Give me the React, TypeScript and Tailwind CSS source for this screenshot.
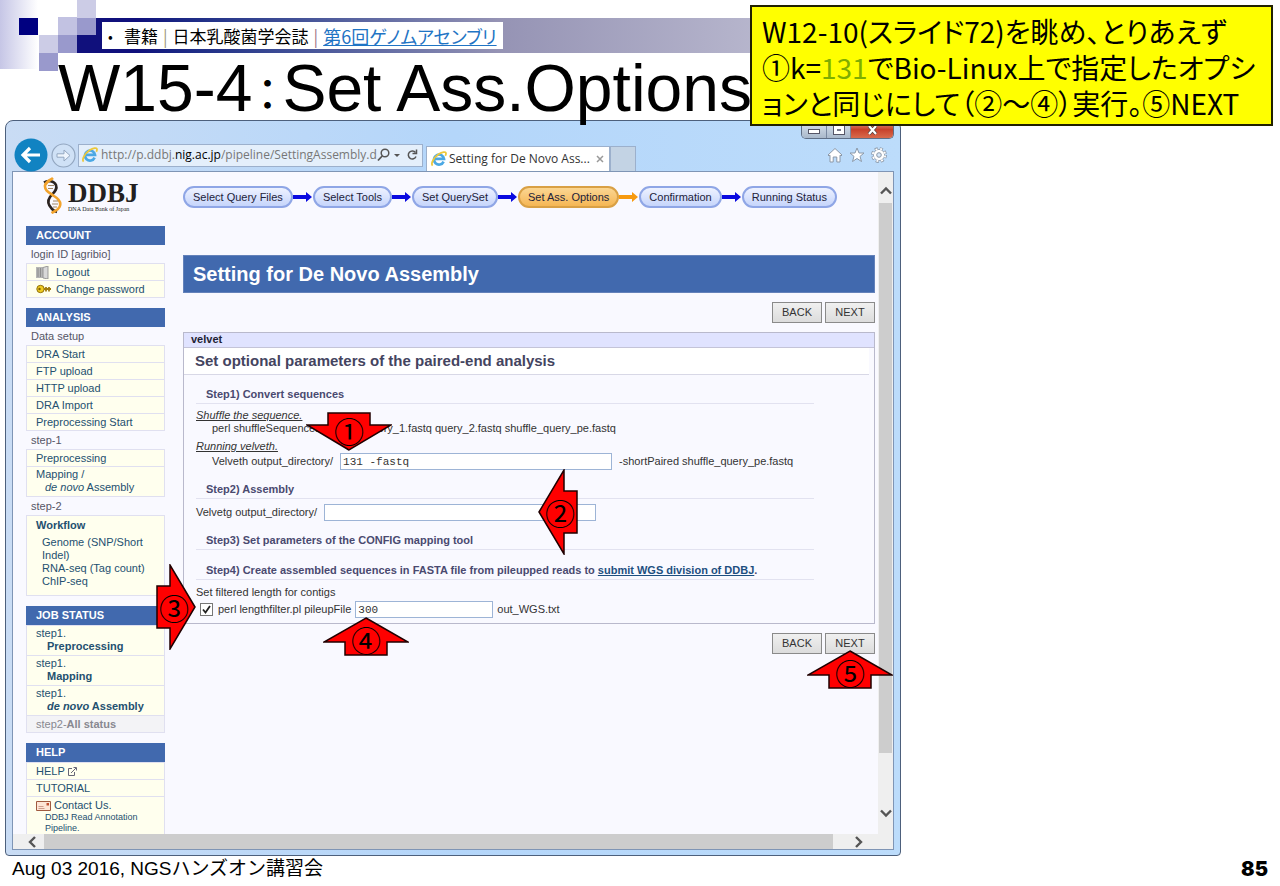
import React from "react";

type Dir = "up" | "down" | "left" | "right";

const ARROWS: Record<Dir, { w: number; h: number; points: string; box: string; digit: string }> = {
  up: { w: 86, h: 39, points: "43,1 85,25 64,25 64,38 22,38 22,25 1,25", box: "w-[86px] h-[39px]", digit: "pt-[4px]" },
  down: { w: 86, h: 39, points: "43,38 1,13 22,13 22,1 64,1 64,13 85,13", box: "w-[86px] h-[39px]", digit: "pb-[4px]" },
  left: { w: 40, h: 86, points: "1,43 26,1 26,22 39,22 39,64 26,64 26,85", box: "w-[40px] h-[86px]", digit: "pl-[4px]" },
  right: { w: 40, h: 86, points: "39,43 14,1 14,22 1,22 1,64 14,64 14,85", box: "w-[40px] h-[86px]", digit: "pr-[4px]" },
};

function Pointer({ dir, label, place }: { dir: Dir; label: string; place: string }) {
  const a = ARROWS[dir];
  return (
    <div className={`absolute ${a.box} ${place}`}>
      <svg className="absolute inset-0" width={a.w} height={a.h} viewBox={`0 0 ${a.w} ${a.h}`} aria-hidden="true">
        <polygon points={a.points} fill="#ff0000" stroke="#200000" strokeWidth="1.5" strokeLinejoin="miter" />
      </svg>
      <span className={`relative flex h-full w-full items-center justify-center font-['Noto_Sans_CJK_JP',sans-serif] text-[30px] leading-[28px] text-black ${a.digit}`}>
        {label}
      </span>
    </div>
  );
}

function IeIcon() {
  return (
    <svg width="16" height="16" viewBox="0 0 16 16" aria-hidden="true" className="shrink-0">
      <path d="M12.6 10.6A5 5 0 1 1 13 7.9H4.2" fill="none" stroke="#4aa8e4" strokeWidth="2.7" />
      <path d="M1.6 14.6C-.6 12.4 3 6.2 7.5 3.2 11 .8 15 .2 15 2.4c0 .8-.3 1.6-.7 2.3" fill="none" stroke="#ecc83c" strokeWidth="1.8" />
    </svg>
  );
}

function DdbjLogo() {
  return (
    <div className="flex h-[37px] items-start gap-[4px] pl-[16px]">
      <svg width="22" height="37" viewBox="0 0 22 37" aria-hidden="true">
        <path d="M2 5.5C6 3 12 4 14 8c2 5-3 8-6 12-2.500 3.500-2 8 2 12 1 1 3 2.500 5 3" fill="none" stroke="#2b2320" strokeWidth="2.6" />
        <path d="M11 1C9 3 4 4 3 8.500c-.5 5 4 7 9 10.500 5 3 7.500 7 5.500 11-1.500 3.500-5 4-8 6" fill="none" stroke="#f2a32c" strokeWidth="2.6" />
        <path d="M6 8.500h6M6 11.500h5M11 24h5M10 27h6M11 30h4" stroke="#8a6a40" strokeWidth=".8" />
      </svg>
      <div className="flex flex-col pt-[4px] font-['Liberation_Serif',serif] text-[#231f20]">
        <span className="text-[27px] font-bold leading-[25px]">DDBJ</span>
        <span className="whitespace-nowrap text-[6px] leading-[7px]">DNA Data Bank of Japan</span>
      </div>
    </div>
  );
}

function SideTitle({ children }: { children: React.ReactNode }) {
  return <h2 className="flex h-[19px] items-center bg-[#4169ae] pl-[10px] font-bold text-white">{children}</h2>;
}

function SideLabel({ children }: { children: React.ReactNode }) {
  return <p className="flex h-[18px] items-center pl-[5px] text-[#555566]">{children}</p>;
}

function SideList({ children }: { children: React.ReactNode }) {
  return <ul className="border border-b-0 border-[#e0e0f0] bg-[#ffffee]">{children}</ul>;
}

function SideItem({ children }: { children: React.ReactNode }) {
  return (
    <li className="border-b border-[#e0e0f0]">
      <a href="#" className="flex h-[16px] items-center pl-[9px]">
        {children}
      </a>
    </li>
  );
}

function SideItem2({ top, children }: { top: string; children: React.ReactNode }) {
  return (
    <li className="border-b border-[#e0e0f0] pb-[2px] pl-[9px] pt-px leading-[13px]">
      <a href="#" className="block">
        {top}
        <span className="block pl-[11px]">{children}</span>
      </a>
    </li>
  );
}

function Sidebar() {
  return (
    <nav className="w-[139px] shrink-0 text-[11px] leading-[13px] text-[#245070]">
      <SideTitle>ACCOUNT</SideTitle>
      <SideLabel>login ID [agribio]</SideLabel>
      <SideList>
        <SideItem>
          <svg width="13" height="13" viewBox="0 0 13 13" className="mr-[7px]" aria-hidden="true">
            <path d="M0 1h7v11H0z" fill="#b5b5b5" />
            <path d="M7 1.5l5-1.500v13l-5-1z" fill="#d8d8d8" stroke="#888" strokeWidth=".8" />
            <path d="M2 2v9M4.500 2v9" stroke="#8d8d8d" />
          </svg>
          Logout
        </SideItem>
        <SideItem>
          <svg width="16" height="10" viewBox="0 0 16 10" className="mr-[4px]" aria-hidden="true">
            <circle cx="4.5" cy="5" r="3.7" fill="#f0cc20" stroke="#90700c" />
            <circle cx="3.5" cy="5" r="1.2" fill="#806000" />
            <path d="M8 5h7M10 5.5v2M13 5.5v2M10 4.5V3M13 4.5V3" stroke="#a07c10" strokeWidth="1.8" />
          </svg>
          Change password
        </SideItem>
      </SideList>

      <div className="mt-[10px]">
        <SideTitle>ANALYSIS</SideTitle>
        <SideLabel>Data setup</SideLabel>
        <SideList>
          <SideItem>DRA Start</SideItem>
          <SideItem>FTP upload</SideItem>
          <SideItem>HTTP upload</SideItem>
          <SideItem>DRA Import</SideItem>
          <SideItem>Preprocessing Start</SideItem>
        </SideList>
        <SideLabel>step-1</SideLabel>
        <SideList>
          <SideItem>Preprocessing</SideItem>
          <li className="border-b border-[#e0e0f0] pb-[2px] pl-[9px] pt-px">
            <a href="#" className="block">
              Mapping /
              <span className="block pl-[9px]">
                <i>de novo</i> Assembly
              </span>
            </a>
          </li>
        </SideList>
        <SideLabel>step-2</SideLabel>
        <SideList>
          <li className="border-b border-[#e0e0f0] pb-[7px] pl-[9px] pt-[3px]">
            <a href="#" className="font-bold">
              Workflow
            </a>
            <div className="flex flex-col pl-[6px] pt-[4px]">
              <a href="#">
                Genome (SNP/Short
                <br />
                Indel)
              </a>
              <a href="#">RNA-seq (Tag count)</a>
              <a href="#">ChIP-seq</a>
            </div>
          </li>
        </SideList>
      </div>

      <div className="mt-[10px]">
        <SideTitle>JOB STATUS</SideTitle>
        <SideList>
          <SideItem2 top="step1.">
            <b>Preprocessing</b>
          </SideItem2>
          <SideItem2 top="step1.">
            <b>Mapping</b>
          </SideItem2>
          <SideItem2 top="step1.">
            <b>
              <i>de novo</i> Assembly
            </b>
          </SideItem2>
          <li className="flex h-[17px] items-center border-b border-[#e0e0f0] bg-[#f3f3f6] pl-[9px] text-[#888890]">
            step2-<b>All status</b>
          </li>
        </SideList>
      </div>

      <div className="mt-[10px]">
        <SideTitle>HELP</SideTitle>
        <SideList>
          <SideItem>
            HELP
            <svg width="9" height="9" viewBox="0 0 9 9" className="ml-[3px]" fill="none" stroke="#667" aria-hidden="true">
              <path d="M4 1.5H.5v7h6V5M3 6l5-5M5.5.5h3v3" />
            </svg>
          </SideItem>
          <SideItem>TUTORIAL</SideItem>
          <li className="h-[37px] pl-[9px] pt-[2px]">
            <a href="#" className="block">
              <span className="flex items-center gap-[3px]">
                <svg width="15" height="10" viewBox="0 0 15 10" aria-hidden="true">
                  <path d="M.5.5h14v9H.5z" fill="#fde5d5" stroke="#a05a40" />
                  <path d="M2.5 5.5h5M2.5 7.5h6" stroke="#c08a78" strokeWidth=".8" />
                  <path d="M10.500 2h2.500v2.500h-2.500z" fill="#c05030" />
                </svg>
                Contact Us.
              </span>
              <span className="block pl-[9px] text-[9px] leading-[11px]">
                DDBJ Read Annotation
                <br />
                Pipeline.
              </span>
            </a>
          </li>
        </SideList>
      </div>
    </nav>
  );
}

const STEPS = ["Select Query Files", "Select Tools", "Set QuerySet", "Set Ass. Options", "Confirmation", "Running Status"];

function Steps() {
  return (
    <ol className="flex items-center text-[11px] leading-[13px] text-[#22223a]">
      {STEPS.map((name, i) => (
        <li key={name} className="flex items-center whitespace-nowrap">
          <span
            className={
              i === 3
                ? "flex h-[22px] items-center rounded-full border-2 border-[#d9a045] bg-linear-to-b from-[#fbd692] to-[#f5b653] px-[8px]"
                : "flex h-[22px] items-center rounded-full border-2 border-[#8fa6e6] bg-linear-to-b from-[#eef2ff] to-[#c6d5fb] px-[8px]"
            }
          >
            {name}
          </span>
          {i < STEPS.length - 1 && (
            <svg width="20" height="12" viewBox="0 0 20 12" aria-hidden="true">
              <path d="M0 4h13V1l6 5-6 5V8H0z" fill={i === 3 ? "#f79a10" : "#0a0ae0"} />
            </svg>
          )}
        </li>
      ))}
    </ol>
  );
}

function NavButtons() {
  const cls =
    "h-[21px] w-[50px] border border-[#8a8a8a] bg-linear-to-b from-[#f0f0f0] to-[#dcdcdc] text-[11px] leading-[13px] text-[#333]";
  return (
    <div className="flex justify-end gap-[3px]">
      <button type="button" className={cls}>
        BACK
      </button>
      <button type="button" className={cls}>
        NEXT
      </button>
    </div>
  );
}

function StepTitle({ children }: { children: React.ReactNode }) {
  return <h4 className="mr-[48px] h-[16px] border-b border-[#e2e2f0] pl-[10px] font-bold text-[#4a4a70]">{children}</h4>;
}

const FIELD =
  "h-[17px] border border-[#9db4d6] bg-white px-[2px] font-['Liberation_Mono',monospace] text-[11px] leading-[13px] text-[#333]";

function Settings() {
  return (
    <main className="min-w-0 flex-1 pr-[3px] pt-[14px] text-[11px] leading-[13px] text-[#333]">
      <Steps />
      <h1 className="mt-[47px] flex h-[38px] items-center border border-[#6482ba] bg-[#4169ae] pl-[9px] text-[20px] font-bold leading-[24px] text-white">
        Setting for De Novo Assembly
      </h1>
      <div className="mt-[9px]">
        <NavButtons />
      </div>
      <section className="mt-[9px] border border-[#b9b9cc]">
        <h2 className="h-[15px] border-b border-[#c4c4d8] bg-[#e0e3ff] pl-[7px] font-bold text-[#222233]">velvet</h2>
        <h3 className="mr-[5px] flex h-[27px] items-center border-b border-[#d8d8e6] bg-white pl-[11px] text-[15px] font-bold leading-[18px] text-[#44445f]">
          Set optional parameters of the paired-end analysis
        </h3>
        <div className="flex flex-col px-[12px] pb-[5px] pt-[13px]">
          <StepTitle>Step1) Convert sequences</StepTitle>
          <p className="mt-[5px] italic underline">Shuffle the sequence.</p>
          <p className="pl-[16px]">perl shuffleSequences_fastq.pl query_1.fastq query_2.fastq shuffle_query_pe.fastq</p>
          <p className="mt-[5px] italic underline">Running velveth.</p>
          <div className="flex items-center pl-[16px]">
            <label htmlFor="velveth">Velveth output_directory/</label>
            <input id="velveth" defaultValue="131 -fastq" className={`${FIELD} ml-[7px] mr-[7px] w-[272px]`} />
            -shortPaired shuffle_query_pe.fastq
          </div>
          <div className="mt-[13px]">
            <StepTitle>Step2) Assembly</StepTitle>
          </div>
          <div className="mt-[5px] flex items-center">
            <label htmlFor="velvetg">Velvetg output_directory/</label>
            <input id="velvetg" className={`${FIELD} ml-[7px] w-[272px]`} />
          </div>
          <div className="mt-[13px]">
            <StepTitle>Step3) Set parameters of the CONFIG mapping tool</StepTitle>
          </div>
          <div className="mt-[14px]">
            <StepTitle>
              Step4) Create assembled sequences in FASTA file from pileupped reads to{" "}
              <a href="#" className="text-[#1d4f80] underline">
                submit WGS division of DDBJ
              </a>
              .
            </StepTitle>
          </div>
          <p className="mt-[6px]">Set filtered length for contigs</p>
          <div className="mt-[2px] flex items-center">
            <span className="relative ml-[4px] mr-[5px] flex h-[13px] w-[13px]">
              <input
                id="filter"
                type="checkbox"
                defaultChecked
                className="peer h-[13px] w-[13px] appearance-none border border-[#777] bg-white"
              />
              <svg
                className="pointer-events-none invisible absolute inset-0 peer-checked:visible"
                width="13"
                height="13"
                viewBox="0 0 13 13"
                fill="none"
                stroke="#222"
                strokeWidth="1.8"
                aria-hidden="true"
              >
                <path d="M3 6.5l2.500 3L10 3" />
              </svg>
            </span>
            <label htmlFor="filter">perl lengthfilter.pl pileupFile</label>
            <input aria-label="Filtered length" defaultValue="300" className={`${FIELD} ml-[4px] mr-[4px] w-[138px]`} />
            out_WGS.txt
          </div>
        </div>
      </section>
      <div className="mt-[9px]">
        <NavButtons />
      </div>
    </main>
  );
}

function WindowControls() {
  return (
    <div className="flex h-[18px] overflow-hidden rounded-b-[5px] border border-t-0 border-[#5f6f86]">
      <button type="button" aria-label="Minimize" className="flex w-[25px] items-end justify-center border-r border-[#7888a0] bg-linear-to-b from-[#dce6f0] to-[#a9b8ca] pb-[4px]">
        <span className="h-[5px] w-[12px] border border-[#556] bg-white" />
      </button>
      <button type="button" aria-label="Maximize" className="flex w-[24px] items-end justify-center border-r border-[#7888a0] bg-linear-to-b from-[#dce6f0] to-[#a9b8ca] pb-[4px]">
        <span className="h-[8px] w-[10px] border-[3px] border-white bg-[#778] outline outline-[#556]" />
      </button>
      <button type="button" aria-label="Close" className="flex w-[42px] items-end justify-center bg-linear-to-b from-[#e09a88] via-[#c8402a] to-[#d86a4c] pb-[3px]">
        <svg width="11" height="10" viewBox="0 0 11 10" aria-hidden="true">
          <path d="M2 1l7 8M9 1l-7 8" stroke="#54403f" strokeWidth="3.6" />
          <path d="M2 1l7 8M9 1l-7 8" stroke="#fff" strokeWidth="2.2" />
        </svg>
      </button>
    </div>
  );
}

function Toolbar() {
  return (
    <div className="flex h-[32px] items-center px-[2px] font-['Open_Sans',sans-serif] text-[12px] leading-[16px]">
      <button type="button" aria-label="Back" className="shrink-0">
        <svg width="34" height="34" viewBox="0 0 34 34" aria-hidden="true">
          <circle cx="17" cy="17" r="16.5" fill="#1183c2" />
          <path d="M26 17H10M16 10l-7 7 7 7" fill="none" stroke="#fff" strokeWidth="3.2" />
        </svg>
      </button>
      <button type="button" aria-label="Forward" className="ml-[3px] shrink-0">
        <svg width="25" height="25" viewBox="0 0 25 25" fill="none" aria-hidden="true">
          <circle cx="12.5" cy="12.5" r="11.5" fill="#cfe1f6" stroke="#93a7c0" strokeWidth="1.2" />
          <path d="M6 10.8h7V7l6 5.5-6 5.5v-3.800H6z" fill="#eef5fd" stroke="#93a7c0" />
        </svg>
      </button>
      <div className="ml-[2px] flex h-[23px] w-[345px] shrink-0 items-center border border-[#9cb0cc] bg-[#e4effb] pl-[3px] text-[#777]">
        <IeIcon />
        <span role="textbox" aria-label="Address" className="ml-[3px] w-[275px] whitespace-nowrap">
          http://p.ddbj.<span className="text-black">nig.ac.jp</span>/pipeline/SettingAssembly.d
        </span>
        <svg width="44" height="16" viewBox="0 0 44 16" fill="none" stroke="#555" strokeWidth="1.5" className="shrink-0" aria-hidden="true">
          <circle cx="9" cy="6" r="3.8" />
          <path d="M6.2 9L2 13.5" strokeWidth="1.8" />
          <path d="M18 7h6l-3 3z" fill="#555" stroke="none" />
          <path d="M39.5 5.5A4 4 0 1 0 40 9.5" />
          <path d="M40.5 2.5v4h-4" />
        </svg>
      </div>
      <div className="ml-[3px] flex h-[25px] w-[184px] shrink-0 items-center self-end border border-b-0 border-[#9cb0cc] bg-white pl-[4px] text-[#333]">
        <IeIcon />
        <span className="ml-[2px] flex-1 whitespace-nowrap">Setting for De Novo Ass...</span>
        <button type="button" aria-label="Close tab" className="mr-[5px] text-[#999]">
          <svg width="8" height="8" viewBox="0 0 8 8" stroke="currentColor" strokeWidth="1.5" aria-hidden="true">
            <path d="M1 1l6 6M7 1L1 7" />
          </svg>
        </button>
      </div>
      <button type="button" aria-label="New tab" className="h-[25px] w-[26px] shrink-0 self-end border border-b-0 border-[#9cb0cc] bg-[#c3d3e4]" />
      <div className="ml-auto flex items-center gap-[6px] pr-[5px]">
        <button type="button" aria-label="Home">
          <svg width="16" height="16" viewBox="0 0 16 16" fill="#fff" stroke="#8b98a8" aria-hidden="true">
            <path d="M8 1.5l7 6.500-1 1-1-.8V15H9.800v-5H6.200v5H3V8.200L2 9 1 8z" />
          </svg>
        </button>
        <button type="button" aria-label="Favorites">
          <svg width="16" height="16" viewBox="0 0 16 16" fill="#fff" stroke="#8b98a8" aria-hidden="true">
            <path d="M8 1l2 5h5l-4 3.400 1.500 5.100L8 11.500l-4.500 3L5 9.400 1 6h5z" />
          </svg>
        </button>
        <button type="button" aria-label="Tools">
          <svg width="16" height="16" viewBox="0 0 16 16" aria-hidden="true">
            <circle cx="8" cy="8" r="6.2" fill="none" stroke="#8b98a8" strokeWidth="3.4" strokeDasharray="2.9 1.97" />
            <circle cx="8" cy="8" r="5.6" fill="#fff" stroke="#8b98a8" strokeWidth=".8" />
            <circle cx="8" cy="8" r="6.2" fill="none" stroke="#fff" strokeWidth="1.8" strokeDasharray="1.9 2.97" strokeDashoffset="-.5" />
            <circle cx="8" cy="8" r="2.3" fill="#d5e7fa" stroke="#8b98a8" />
          </svg>
        </button>
      </div>
    </div>
  );
}

function Chevron({ d }: { d: string }) {
  return (
    <svg width="12" height="12" viewBox="0 0 12 12" fill="none" stroke="#555" strokeWidth="2.4" aria-hidden="true">
      <path d={d} />
    </svg>
  );
}

function Browser() {
  return (
    <section className="ml-[5px] w-[70%] min-w-[896px] rounded-t-[8px] rounded-b-[4px] border border-[#4d607c] bg-linear-to-r from-[#c9dcf4] via-[#b4d6fa] to-[#bcdcfb] px-[6px] pb-[5px]">
      <div className="flex justify-end">
        <WindowControls />
      </div>
      <Toolbar />
      <div className="border border-[#7f95b5] bg-[#f9f9ff]">
        <div className="flex">
          <div className="flex min-w-0 flex-1 flex-col">
            <div className="flex gap-[18px] pl-[13px]">
              <div className="flex shrink-0 flex-col">
                <div className="h-[54px] pt-[5px]">
                  <DdbjLogo />
                </div>
                <Sidebar />
              </div>
              <Settings />
            </div>
          </div>
          <div className="flex w-[15px] shrink-0 flex-col items-center bg-[#efefef]">
            <div className="flex h-[31px] items-center pt-[6px]">
              <Chevron d="M1 8.5l5-5 5 5" />
            </div>
            <div className="w-[13px] flex-1 bg-[#cdcdcd]" />
            <div className="flex h-[81px] items-end pb-[15px]">
              <Chevron d="M1 3.5l5 5 5-5" />
            </div>
          </div>
        </div>
        <div className="flex h-[15px] items-center bg-[#efefef] pl-[13px]">
          <Chevron d="M9 1L4 6l5 5" />
          <div className="ml-[6px] h-full flex-1 bg-[#cdcdcd]" />
          <div className="flex w-[60px] items-center pl-[20px]">
            <Chevron d="M3 1l5 5-5 5" />
          </div>
        </div>
      </div>
    </section>
  );
}

function Ornament() {
  return (
    <div aria-hidden="true" className="absolute left-0 top-0 h-[71px] w-[96px]">
      <div className="absolute left-0 top-0 h-[69px] w-[38px] bg-linear-to-r from-[#c6c6e6] to-white" />
      <div className="absolute left-[19px] top-[18px] h-[17px] w-[19px] bg-[#000080]" />
      <div className="absolute left-[77px] top-0 h-[18px] w-[19px] bg-[#cccce6]" />
      <div className="absolute left-[58px] top-[17px] h-[18px] w-[19px] bg-[#c2c2e2]" />
      <div className="absolute left-[77px] top-[18px] h-[17px] w-[19px] bg-[#9999cc]" />
      <div className="absolute left-[39px] top-[35px] h-[18px] w-[19px] bg-[#cccce6]" />
      <div className="absolute left-[58px] top-[35px] h-[18px] w-[19px] bg-[#9999cc]" />
      <div className="absolute left-[39px] top-[53px] h-[18px] w-[19px] bg-[#9999cc]" />
    </div>
  );
}

export default function App() {
  return (
    <div className="relative min-w-[1280px] bg-white font-['Liberation_Sans','Noto_Sans_CJK_JP',sans-serif] text-black">
      <header className="pt-[18px]">
        <div className="ml-[77px] flex h-[35px] items-center bg-linear-to-r from-[#10107c] from-5% via-[#9593b4] via-35% to-white pl-[25px]">
          <p className="flex h-[27px] w-[401px] items-center whitespace-nowrap bg-white pl-[6px] font-['Noto_Sans_CJK_JP',sans-serif] text-[17px] leading-[24px] [font-feature-settings:'palt']">
            <span className="w-[16px] text-[14px]">•</span>
            書籍<span className="px-[5px] text-[#a09880]">|</span>日本乳酸菌学会誌<span className="px-[5px] text-[#a07888]">|</span>
            <a href="#" className="text-[18px] text-[#1f74c4] underline">
              第6回ゲノムアセンブリ
            </a>
          </p>
        </div>
        <Ornament />
        <h1 className="relative z-10 -mb-[7px] h-[74px] whitespace-nowrap pl-[58px] text-[66px] leading-[70px] [font-feature-settings:'palt']">
          W15-4<span className="mx-[4px] text-[44px]">：</span>Set Ass.Options
        </h1>
      </header>

      <Browser />

      <footer className="flex h-[26px] items-center justify-between pl-[12px] pr-[12px]">
        <span className="text-[19px] leading-[24px]">Aug 03 2016, NGSハンズオン講習会</span>
        <span className="font-['Inter',sans-serif] text-[20px] font-black leading-[24px]">85</span>
      </footer>

      <aside className="absolute right-[7px] top-[5px] z-20 w-[523px] whitespace-nowrap border-2 border-[#222200] bg-[#ffff00] pb-[3px] pl-[10px] pt-[6px] font-['Noto_Sans_CJK_JP',sans-serif] text-[28px] leading-[36px] [font-feature-settings:'palt']">
        W12-10(スライド72)を眺め、とりあえず
        <br />
        ①k=<span className="text-[#7fae00]">131</span>でBio-Linux上で指定したオプシ
        <br />
        ョンと同じにして（②～④）実行。⑤NEXT
      </aside>

      <Pointer dir="down" label="①" place="left-[306px] top-[412px]" />
      <Pointer dir="left" label="②" place="left-[538px] top-[469px]" />
      <Pointer dir="right" label="③" place="left-[156px] top-[564px]" />
      <Pointer dir="up" label="④" place="left-[323px] top-[617px]" />
      <Pointer dir="up" label="⑤" place="left-[807px] top-[650px]" />
    </div>
  );
}
